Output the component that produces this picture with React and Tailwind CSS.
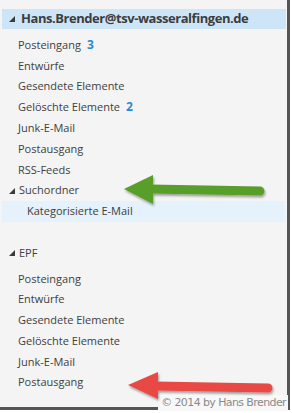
import React from "react";

const Tri = () => (
  <svg width="6" height="6" viewBox="0 0 6 6" className="shrink-0">
    <polygon points="6,0 6,6 0,6" fill="#3a3a3a" />
  </svg>
);

const Row = ({ children, count, hl }) => (
  <div className={`h-[20.8px] flex items-center ${hl ? "bg-[#e5f1fb] mx-[2px] pl-[25px]" : "pl-[18px]"}`}>
    <span>{children}</span>
    {count && <span className="ml-[6px] text-[12px] font-bold text-[#2a8ad4]">{count}</span>}
  </div>
);

export default function App() {
  const font = { fontFamily: '"Open Sans", "Noto Sans", sans-serif' };
  return (
    <div className="relative w-[292px] h-[413px] bg-white overflow-hidden">
      <div
        className="w-[290px] h-[410px] bg-[#f4f4f4] border-r-[3px] border-b-[3px] border-[#555] text-[11px] text-[#404040] pt-[9px]"
        style={font}
      >
        <div className="h-[20px] ml-[2px] mr-[1px] bg-[#cde6f7] flex items-center pl-[7px] gap-[6px]">
          <Tri />
          <span className="text-[13px] font-bold text-[#3d3d3d] tracking-[-0.45px]">Hans.Brender@tsv-wasseralfingen.de</span>
        </div>
        <div className="mt-[5.6px]">
          <Row count="3">Posteingang</Row>
          <Row>Entwürfe</Row>
          <Row>Gesendete Elemente</Row>
          <Row count="2">Gelöschte Elemente</Row>
          <Row>Junk-E-Mail</Row>
          <Row>Postausgang</Row>
          <Row>RSS-Feeds</Row>
          <div className="h-[20.8px] flex items-center pl-[9px] gap-[4px]">
            <Tri />
            <span>Suchordner</span>
          </div>
          <Row hl>Kategorisierte E-Mail</Row>
          <div className="h-[20.8px]" />
          <div className="h-[20.8px] flex items-center pl-[9px] gap-[4px]">
            <Tri />
            <span>EPF</span>
          </div>
          <div className="h-[5px]" />
          <Row>Posteingang</Row>
          <Row>Entwürfe</Row>
          <Row>Gesendete Elemente</Row>
          <Row>Gelöschte Elemente</Row>
          <Row>Junk-E-Mail</Row>
          <Row>Postausgang</Row>
        </div>
      </div>
      <div
        className="absolute right-[4px] top-[395px] h-[16px] flex items-center text-[11px] text-[#8a8a8a] bg-[#f8f8f8] pl-[3px] pr-[2px]"
        style={{ fontFamily: '"DejaVu Sans", sans-serif', letterSpacing: "-0.6px" }}
      >
        © 2014 by Hans Brender
      </div>
      <svg className="absolute left-0 top-0 pointer-events-none" width="292" height="413">
        <defs>
          <filter id="sh" x="-20%" y="-50%" width="140%" height="200%">
            <feDropShadow dx="1" dy="2" stdDeviation="1.2" floodColor="#000" floodOpacity="0.35" />
          </filter>
        </defs>
        <g filter="url(#sh)">
          <polygon points="124,189 153,175 153,204" fill="#5a9e2a" />
          <line x1="150" y1="189" x2="260" y2="191" stroke="#5a9e2a" strokeWidth="9" strokeLinecap="round" />
        </g>
        <g filter="url(#sh)">
          <polygon points="128,385 158,372 158,399" fill="#e84a45" />
          <line x1="155" y1="386" x2="268" y2="388" stroke="#e84a45" strokeWidth="9" strokeLinecap="round" />
        </g>
      </svg>
    </div>
  );
}
